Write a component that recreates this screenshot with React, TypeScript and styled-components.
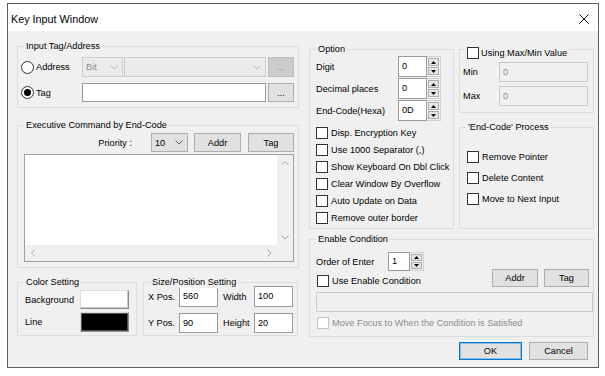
import React from 'react';
import styled, { createGlobalStyle } from 'styled-components';

const GlobalStyle = createGlobalStyle`
  html, body { margin: 0; padding: 0; background: #ffffff; }
  body {
    font-family: "Liberation Sans", Arial, sans-serif;
    font-size: 9.2px;
    color: #000;
  }
  * { box-sizing: border-box; }
`;

const Page = styled.div`
  padding: 3px 0 0 7px;
`;

const Window = styled.div`
  width: 592px;
  height: 365px;
  border: 1px solid #5f5f5f;
  background: #f0f0f0;
  display: flex;
  flex-direction: column;
`;

const TitleBar = styled.div`
  height: 27px;
  flex: none;
  background: #ffffff;
  display: flex;
  align-items: center;
  justify-content: space-between;
  padding: 3px 9px 0 3px;
`;

const TitleText = styled.span`
  font-size: 10.8px;
`;

const Body = styled.div`
  flex: 1;
  display: grid;
  grid-template-columns: 282px 285px;
  column-gap: 10px;
  padding-left: 9px;
`;

const Column = styled.div<{ $pt: number }>`
  display: flex;
  flex-direction: column;
  padding-top: ${p => p.$pt}px;
`;

const Group = styled.div<{ $w?: number; $h: number; $mt?: number }>`
  position: relative;
  flex: none;
  border: 1px solid #dcdcdc;
  height: ${p => p.$h}px;
  ${p => (p.$w ? `width: ${p.$w}px;` : '')}
  margin-top: ${p => p.$mt ?? 0}px;
`;

const Legend = styled.div<{ $top?: number; $left?: number }>`
  position: absolute;
  top: ${p => p.$top ?? -7}px;
  left: ${p => p.$left ?? 6}px;
  padding: 0 2px;
  background: #f0f0f0;
  line-height: 12px;
  white-space: nowrap;
  display: flex;
  align-items: center;
  gap: 2px;
`;

const Inner = styled.div<{ $pt: number; $pl: number; $pr?: number }>`
  display: flex;
  flex-direction: column;
  padding: ${p => p.$pt}px ${p => p.$pr ?? 0}px 0 ${p => p.$pl}px;
`;

const Row = styled.div<{ $h: number; $mt?: number; $end?: boolean }>`
  display: flex;
  align-items: center;
  height: ${p => p.$h}px;
  margin-top: ${p => p.$mt ?? 0}px;
  justify-content: ${p => (p.$end ? 'flex-end' : 'flex-start')};
  white-space: nowrap;
`;

const Label = styled.span<{ $w?: number; $ml?: number; $mr?: number }>`
  ${p => (p.$w ? `width: ${p.$w}px;` : '')}
  flex: none;
  margin-left: ${p => p.$ml ?? 0}px;
  margin-right: ${p => p.$mr ?? 0}px;
  white-space: nowrap;
`;

const RadioLabel = styled.label`
  width: 61px;
  flex: none;
  display: flex;
  align-items: center;
  gap: 2px;
`;

const RadioCircle = styled.span<{ $on?: boolean }>`
  width: 13px;
  height: 13px;
  border-radius: 50%;
  border: 1px solid #333;
  background: #fff;
  flex: none;
  display: flex;
  align-items: center;
  justify-content: center;
  &::after {
    content: '';
    width: 7px;
    height: 7px;
    border-radius: 50%;
    background: ${p => (p.$on ? '#000' : 'transparent')};
  }
`;

const Combo = styled.div<{ $w: number; $disabled?: boolean; $ml?: number; $h?: number }>`
  width: ${p => p.$w}px;
  height: ${p => p.$h ?? 20}px;
  margin-left: ${p => p.$ml ?? 0}px;
  flex: none;
  display: flex;
  align-items: center;
  padding: 0 4px 0 3px;
  border: 1px solid ${p => (p.$disabled ? '#cccccc' : '#adadad')};
  background: ${p => (p.$disabled ? '#ebebeb' : '#e1e1e1')};
  color: ${p => (p.$disabled ? '#8c8c8c' : '#000')};
  & > svg { margin-left: auto; }
`;

const Button = styled.div<{ $w: number; $h?: number; $ml?: number; $disabled?: boolean; $default?: boolean }>`
  width: ${p => p.$w}px;
  height: ${p => p.$h ?? 19}px;
  margin-left: ${p => p.$ml ?? 0}px;
  flex: none;
  display: flex;
  align-items: center;
  justify-content: center;
  border: 1px solid ${p => (p.$default ? '#0078d7' : p.$disabled ? '#bfbfbf' : '#adadad')};
  box-shadow: ${p => (p.$default ? 'inset 0 0 0 1px rgba(0,120,215,0.35)' : 'none')};
  background: ${p => (p.$disabled ? '#cccccc' : '#e1e1e1')};
  color: ${p => (p.$disabled ? '#9a9a9a' : '#000')};
`;

const Field = styled.div<{ $w: number; $h?: number; $ml?: number; $disabled?: boolean }>`
  width: ${p => p.$w}px;
  height: ${p => p.$h ?? 20}px;
  margin-left: ${p => p.$ml ?? 0}px;
  flex: none;
  display: flex;
  align-items: center;
  padding: 0 0 1px 3px;
  border: 1px solid ${p => (p.$disabled ? '#cccccc' : '#9a9a9a')};
  background: ${p => (p.$disabled ? '#f0f0f0' : '#ffffff')};
  color: ${p => (p.$disabled ? '#8c8c8c' : '#000')};
`;

const Spin = styled.div<{ $w: number; $h?: number }>`
  display: flex;
  flex: none;
  width: ${p => p.$w}px;
  height: ${p => p.$h ?? 21}px;
`;

const SpinEdit = styled.div`
  flex: 1;
  display: flex;
  align-items: center;
  padding: 0 0 1px 3px;
  border: 1px solid #9a9a9a;
  background: #fff;
`;

const SpinButtons = styled.div`
  width: 14px;
  flex: none;
  display: flex;
  flex-direction: column;
  gap: 1px;
  padding: 1px;
  border: 1px solid #d0d0d0;
  border-left: none;
  background: #f0f0f0;
`;

const SpinBtn = styled.div`
  flex: 1;
  display: flex;
  align-items: center;
  justify-content: center;
  border: 1px solid #adadad;
  background: #e5e5e5;
`;

const CheckRow = styled.label<{ $h?: number; $mt?: number; $disabled?: boolean }>`
  display: flex;
  align-items: center;
  gap: 3px;
  height: ${p => p.$h ?? 17}px;
  margin-top: ${p => p.$mt ?? 0}px;
  color: ${p => (p.$disabled ? '#8d8d8d' : '#000')};
  white-space: nowrap;
`;

const Box = styled.span<{ $disabled?: boolean }>`
  width: 12px;
  height: 12px;
  flex: none;
  border: 1px solid ${p => (p.$disabled ? '#c4c4c4' : '#333333')};
  background: #fff;
`;

const ListBox = styled.div`
  margin: 2px 4px 0 6px;
  height: 108px;
  border: 1px solid #a0a0a0;
  background: #fff;
  display: grid;
  grid-template-columns: 1fr 16px;
  grid-template-rows: 1fr 16px;
`;

const ListArea = styled.div`
  background: #fff;
`;

const VScroll = styled.div`
  background: #f0f0f0;
  display: flex;
  flex-direction: column;
  justify-content: space-between;
  align-items: center;
`;

const HScroll = styled.div`
  background: #f0f0f0;
  display: flex;
  justify-content: space-between;
  align-items: center;
`;

const ScrollArrow = styled.div`
  width: 16px;
  height: 16px;
  display: flex;
  align-items: center;
  justify-content: center;
`;

const Corner = styled.div`
  background: #f0f0f0;
`;

const Swatch = styled.div<{ $color: string; $h: number }>`
  width: 49px;
  height: ${p => p.$h}px;
  flex: none;
  background: ${p => p.$color};
  border: 1px solid;
  border-color: #dcdcdc #8a8a8a #8a8a8a #dcdcdc;
  box-shadow: ${p => (p.$color === '#000000' ? 'inset 0 0 0 1px #555' : 'inset -1px -1px 0 #c8c8c8')};
`;

const TopRow = styled.div`
  display: flex;
  gap: 5px;
`;

const SubColumn = styled.div`
  display: flex;
  flex-direction: column;
  width: 135px;
`;

const BottomRow = styled.div`
  display: flex;
  gap: 6px;
  margin-top: 14px;
`;

const CondTop = styled.div`
  display: flex;
  align-items: flex-end;
  justify-content: space-between;
  padding-right: 4px;
`;

const CondLeft = styled.div`
  display: flex;
  flex-direction: column;
`;

const CondButtons = styled.div`
  display: flex;
  gap: 6px;
  margin-bottom: 3px;
`;

const DialogButtons = styled.div`
  display: flex;
  justify-content: flex-end;
  gap: 7px;
  margin-top: 5px;
  padding-right: 6px;
`;

const ChevronDown = ({ color = '#606060' }: { color?: string }) => (
  <svg width="8" height="5" viewBox="0 0 8 5">
    <polyline points="0.5,0.5 4,4 7.5,0.5" fill="none" stroke={color} strokeWidth="1" />
  </svg>
);

const Chev = ({ dir }: { dir: 'up' | 'down' | 'left' | 'right' }) => {
  const pts =
    dir === 'up'
      ? '0.5,4 4,0.5 7.5,4'
      : dir === 'down'
      ? '0.5,0.5 4,4 7.5,0.5'
      : dir === 'left'
      ? '4,0.5 0.5,4 4,7.5'
      : '0.5,0.5 4,4 0.5,7.5';
  const vertical = dir === 'up' || dir === 'down';
  return (
    <svg width={vertical ? 8 : 5} height={vertical ? 5 : 8} viewBox={vertical ? '0 0 8 5' : '0 0 5 8'}>
      <polyline points={pts} fill="none" stroke="#a6a6a6" strokeWidth="1" />
    </svg>
  );
};

const Tri = ({ up }: { up?: boolean }) => (
  <svg width="5" height="3" viewBox="0 0 5 3">
    <polygon points={up ? '0,3 2.5,0 5,3' : '0,0 5,0 2.5,3'} fill="#000" />
  </svg>
);

const CloseIcon = () => (
  <svg width="10" height="10" viewBox="0 0 10 10">
    <line x1="0.5" y1="0.5" x2="9.5" y2="9.5" stroke="#111" strokeWidth="1" />
    <line x1="9.5" y1="0.5" x2="0.5" y2="9.5" stroke="#111" strokeWidth="1" />
  </svg>
);

const SpinBox = ({ value, w, h }: { value: string; w: number; h?: number }) => (
  <Spin $w={w} $h={h}>
    <SpinEdit>{value}</SpinEdit>
    <SpinButtons>
      <SpinBtn><Tri up /></SpinBtn>
      <SpinBtn><Tri /></SpinBtn>
    </SpinButtons>
  </Spin>
);

const Check = ({ label, h, mt, disabled }: { label: string; h?: number; mt?: number; disabled?: boolean }) => (
  <CheckRow $h={h} $mt={mt} $disabled={disabled}>
    <Box $disabled={disabled} />
    {label}
  </CheckRow>
);

const optionChecks = [
  'Disp. Encryption Key',
  'Use 1000 Separator (,)',
  'Show Keyboard On Dbl Click',
  'Clear Window By Overflow',
  'Auto Update on Data',
  'Remove outer border',
];

const processChecks = ['Remove Pointer', 'Delete Content', 'Move to Next Input'];

export default function App() {
  return (
    <>
      <GlobalStyle />
      <Page>
        <Window>
          <TitleBar>
            <TitleText>Key Input Window</TitleText>
            <CloseIcon />
          </TitleBar>
          <Body>
            <Column $pt={15}>
              <Group $h={62}>
                <Legend>Input Tag/Address</Legend>
                <Inner $pt={10} $pl={3}>
                  <Row $h={20}>
                    <RadioLabel><RadioCircle />Address</RadioLabel>
                    <Combo $w={41} $disabled>Bit<ChevronDown color="#b8b8b8" /></Combo>
                    <Combo $w={142} $ml={1} $disabled><ChevronDown color="#b8b8b8" /></Combo>
                    <Button $w={26} $h={20} $ml={2} $disabled>...</Button>
                  </Row>
                  <Row $h={19} $mt={6}>
                    <RadioLabel><RadioCircle $on />Tag</RadioLabel>
                    <Field $w={184} $h={19} />
                    <Button $w={26} $h={19} $ml={2}>...</Button>
                  </Row>
                </Inner>
              </Group>

              <Group $h={143} $mt={17}>
                <Legend>Executive Command by End-Code</Legend>
                <Inner $pt={7} $pl={0}>
                  <Row $h={19} $end>
                    <Label $mr={19}>Priority :</Label>
                    <Combo $w={37} $h={19}>10<ChevronDown /></Combo>
                    <Button $w={47} $ml={6}>Addr</Button>
                    <Button $w={46} $ml={7}>Tag</Button>
                    <Label $w={4} />
                  </Row>
                  <ListBox>
                    <ListArea />
                    <VScroll>
                      <ScrollArrow><Chev dir="up" /></ScrollArrow>
                      <ScrollArrow><Chev dir="down" /></ScrollArrow>
                    </VScroll>
                    <HScroll>
                      <ScrollArrow><Chev dir="left" /></ScrollArrow>
                      <ScrollArrow><Chev dir="right" /></ScrollArrow>
                    </HScroll>
                    <Corner />
                  </ListBox>
                </Inner>
              </Group>

              <BottomRow>
                <Group $w={120} $h={54}>
                  <Legend>Color Setting</Legend>
                  <Inner $pt={7} $pl={7}>
                    <Row $h={19}>
                      <Label $w={55}>Background</Label>
                      <Swatch $color="#ffffff" $h={19} />
                    </Row>
                    <Row $h={20} $mt={3}>
                      <Label $w={55}>Line</Label>
                      <Swatch $color="#000000" $h={20} />
                    </Row>
                  </Inner>
                </Group>
                <Group $w={155} $h={54}>
                  <Legend>Size/Position Setting</Legend>
                  <Inner $pt={3} $pl={4}>
                    <Row $h={21}>
                      <Label $w={31}>X Pos.</Label>
                      <Field $w={39} $h={21}>560</Field>
                      <Label $w={31} $ml={5}>Width</Label>
                      <Field $w={39} $h={21}>100</Field>
                    </Row>
                    <Row $h={20} $mt={6}>
                      <Label $w={31}>Y Pos.</Label>
                      <Field $w={39}>90</Field>
                      <Label $w={31} $ml={5}>Height</Label>
                      <Field $w={39}>20</Field>
                    </Row>
                  </Inner>
                </Group>
              </BottomRow>
            </Column>

            <Column $pt={18}>
              <TopRow>
                <Group $w={145} $h={180}>
                  <Legend>Option</Legend>
                  <Inner $pt={6} $pl={6}>
                    <Row $h={21}>
                      <Label $w={82}>Digit</Label>
                      <SpinBox value="0" w={43} />
                    </Row>
                    <Row $h={21} $mt={1}>
                      <Label $w={82}>Decimal places</Label>
                      <SpinBox value="0" w={43} />
                    </Row>
                    <Row $h={21} $mt={1}>
                      <Label $w={82}>End-Code(Hexa)</Label>
                      <SpinBox value="0D" w={43} />
                    </Row>
                    <Check label={optionChecks[0]} mt={3} />
                    {optionChecks.slice(1).map(c => (
                      <Check key={c} label={c} />
                    ))}
                  </Inner>
                </Group>
                <SubColumn>
                  <Group $h={64}>
                    <Legend $top={-3} $left={5}>
                      <Box />
                      Using Max/Min Value
                    </Legend>
                    <Inner $pt={12} $pl={3}>
                      <Row $h={20}>
                        <Label $w={36}>Min</Label>
                        <Field $w={89} $disabled>0</Field>
                      </Row>
                      <Row $h={20} $mt={4}>
                        <Label $w={36}>Max</Label>
                        <Field $w={89} $disabled>0</Field>
                      </Row>
                    </Inner>
                  </Group>
                  <Group $h={102} $mt={14}>
                    <Legend>'End-Code' Process</Legend>
                    <Inner $pt={20} $pl={7}>
                      <Check label={processChecks[0]} />
                      <Check label={processChecks[1]} mt={4} />
                      <Check label={processChecks[2]} mt={4} />
                    </Inner>
                  </Group>
                </SubColumn>
              </TopRow>

              <Group $h={98} $mt={10}>
                <Legend>Enable Condition</Legend>
                <Inner $pt={12} $pl={6}>
                  <CondTop>
                    <CondLeft>
                      <Row $h={19}>
                        <Label $w={72}>Order of Enter</Label>
                        <SpinBox value="1" w={36} h={19} />
                      </Row>
                      <Row $h={18} $mt={1}>
                        <Label $ml={1}>
                          <Check label="Use Enable Condition" h={18} />
                        </Label>
                      </Row>
                    </CondLeft>
                    <CondButtons>
                      <Button $w={46} $h={18}>Addr</Button>
                      <Button $w={45} $h={18}>Tag</Button>
                    </CondButtons>
                  </CondTop>
                  <Row $h={20} $mt={2}>
                    <Field $w={277} $disabled />
                  </Row>
                  <Row $h={17} $mt={2}>
                    <Label $ml={1}>
                      <Check label="Move Focus to When the Condition is Satisfied" disabled />
                    </Label>
                  </Row>
                </Inner>
              </Group>

              <DialogButtons>
                <Button $w={63} $h={18} $default>OK</Button>
                <Button $w={59} $h={18}>Cancel</Button>
              </DialogButtons>
            </Column>
          </Body>
        </Window>
      </Page>
    </>
  );
}
